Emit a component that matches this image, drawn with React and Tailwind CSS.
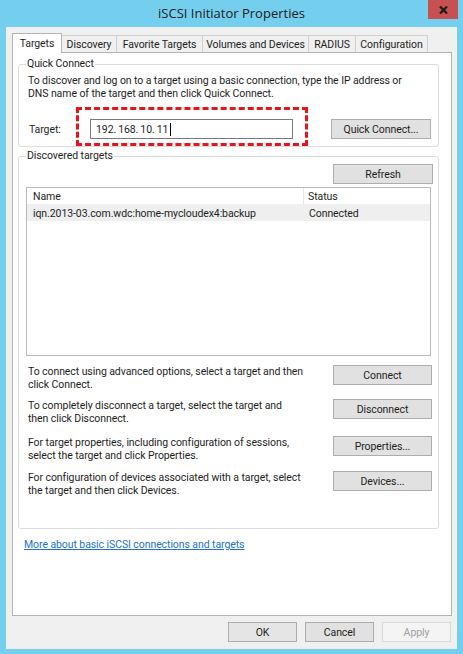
import React from 'react';

const tabs = [
    { label: 'Targets', w: 'w-[50px]', active: true },
    { label: 'Discovery', w: 'w-[56px]' },
    { label: 'Favorite Targets', w: 'w-[87px]' },
    { label: 'Volumes and Devices', w: 'w-[107px]' },
    { label: 'RADIUS', w: 'w-[48px]' },
    { label: 'Configuration', w: 'w-[73px]' },
];

const actions = [
    { text: ['To connect using advanced options, select a target and then', 'click Connect.'], btn: 'Connect', mt: 'mt-[9px]' },
    { text: ['To completely disconnect a target, select the target and', 'then click Disconnect.'], btn: 'Disconnect', mt: 'mt-[8px]' },
    { text: ['For target properties, including configuration of sessions,', 'select the target and click Properties.'], btn: 'Properties...', mt: 'mt-[11px]' },
    { text: ['For configuration of devices associated with a target, select', 'the target and then click Devices.'], btn: 'Devices...', mt: 'mt-[9px]' },
];

const Button = ({ children, className = '' }) => (
    <div className={`h-[20px] flex items-center justify-center border border-[#adadad] bg-[#e1e1e1] text-[#1e1e1e] ${className}`}>
        {children}
    </div>
);

const App = () => {
    return (
        <div className="w-[463px] h-[654px] bg-[#74cfee] flex flex-col font-['Roboto',Arial,sans-serif] text-[10.5px] tracking-[-0.08px] leading-[13px] text-[#1e1e1e]">
            {/* title bar */}
            <div className="relative h-[27px] shrink-0 flex items-center justify-center text-[13px] tracking-normal text-[#1a1a1a] font-['Open_Sans',sans-serif]">
                iSCSI Initiator Properties
                <div className="absolute left-[428px] top-0 w-[30px] h-[19px] bg-[#c75050] flex items-center justify-center">
                    <svg width="9" height="8" viewBox="0 0 9 8">
                        <path d="M1 0.5 L8 7.5 M8 0.5 L1 7.5" stroke="#1b1b1b" strokeWidth="2.2" />
                    </svg>
                </div>
            </div>

            {/* client area */}
            <div className="ml-[6px] w-[451px] h-[622px] bg-[#f0f0f0] pl-[6px] flex flex-col">
                <div className="h-[25px] flex items-end">
                    {tabs.map((t) => (
                        <div
                            key={t.label}
                            className={
                                t.active
                                    ? `relative z-10 ${t.w} h-[20px] -mb-px bg-white border border-b-0 border-[#b4b4b4] flex items-start justify-center pt-[3px] whitespace-nowrap`
                                    : `${t.w} h-[17px] -ml-px bg-[#f0f0f0] border border-b-0 border-[#d0d0d0] flex items-center justify-center whitespace-nowrap`
                            }
                        >
                            {t.label}
                        </div>
                    ))}
                </div>

                {/* tab panel */}
                <div className="w-[440px] h-[564px] bg-white border border-[#b4b4b4] flex flex-col">
                    {/* Quick Connect */}
                    <div className="ml-[5px] mt-[11px] w-[421px] border border-[#dcdcdc] rounded-[3px] pl-[9px] pb-[7px]">
                        <div className="-mt-[8px] -ml-[2px] w-fit px-[1px] bg-white leading-[14px]">Quick Connect</div>
                        <p className="mt-[3px]">
                            To discover and log on to a target using a basic connection, type the IP address or<br />
                            DNS name of the target and then click Quick Connect.
                        </p>
                        <div className="mt-[19px] flex items-center">
                            <div className="w-[62px] pl-[1px]">Target:</div>
                            <div className="relative">
                                <div className="w-[203px] h-[20px] border border-[#7a7a7a] bg-white flex items-center pl-[5px] gap-[2px]">
                                    <span>192.</span><span>168.</span><span>10.</span><span>11</span>
                                    <span className="w-px h-[13px] bg-black"></span>
                                </div>
                                <div className="absolute -left-[14px] -top-[12px] w-[232px] h-[39px] border-[3px] border-dashed border-[#e8131b] pointer-events-none"></div>
                            </div>
                            <Button className="ml-[38px] w-[100px]">Quick Connect...</Button>
                        </div>
                    </div>

                    {/* Discovered targets */}
                    <div className="ml-[5px] mt-[9px] w-[421px] border border-[#dcdcdc] rounded-[3px] pb-[31px]">
                        <div className="-mt-[8px] ml-[7px] w-fit px-[1px] bg-white leading-[14px]">Discovered targets</div>
                        <div className="mt-[1px] flex justify-end pr-[5px]">
                            <Button className="w-[100px] h-[19px]">Refresh</Button>
                        </div>
                        <div className="mt-[3px] ml-[7px] w-[405px] h-[169px] border border-[#b9b9b9] bg-white">
                            <div className="flex h-[17px] border-b border-[#efefef]">
                                <div className="w-[277px] border-r border-[#e5e5e5] pl-[6px] flex items-center">Name</div>
                                <div className="flex-1 pl-[4px] flex items-center">Status</div>
                            </div>
                            <div className="flex h-[16px] bg-[#efefef]">
                                <div className="w-[277px] pl-[6px] flex items-center">iqn.2013-03.com.wdc:home-mycloudex4:backup</div>
                                <div className="flex-1 pl-[5px] flex items-center">Connected</div>
                            </div>
                        </div>

                        {actions.map((a) => (
                            <div key={a.btn} className={`${a.mt} h-[26px] flex items-start pl-[9px] pr-[6px]`}>
                                <p className="flex-1">{a.text[0]}<br />{a.text[1]}</p>
                                <Button className="w-[99px]">{a.btn}</Button>
                            </div>
                        ))}
                    </div>

                    <a href="#" className="mt-[9px] ml-[11px] w-fit text-[#1c72c9] underline">
                        More about basic iSCSI connections and targets
                    </a>
                </div>

                {/* dialog buttons */}
                <div className="mt-[6px] pr-[6px] flex justify-end gap-[8px]">
                    <Button className="w-[69px] border-[#7eb4ea] bg-[#e5e5e5]">OK</Button>
                    <Button className="w-[69px]">Cancel</Button>
                    <div className="w-[69px] h-[20px] flex items-center justify-center border border-[#d9d9d9] bg-[#f4f4f4] text-[#a0a0a0]">Apply</div>
                </div>
            </div>
        </div>
    );
};

export default App;
